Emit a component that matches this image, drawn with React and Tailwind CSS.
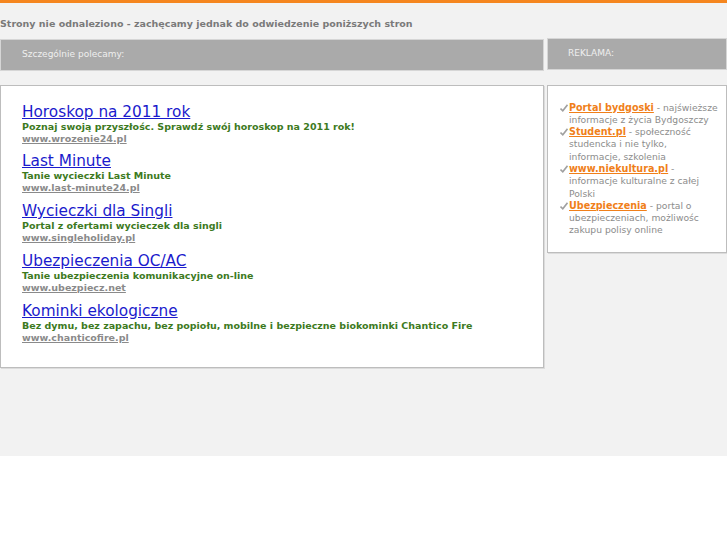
const polecane = [
  {
    title: 'Horoskop na 2011 rok',
    desc: 'Poznaj swoją przyszłośc. Sprawdź swój horoskop na 2011 rok!',
    url: 'www.wrozenie24.pl',
  },
  { title: 'Last Minute', desc: 'Tanie wycieczki Last Minute', url: 'www.last-minute24.pl' },
  { title: 'Wycieczki dla Singli', desc: 'Portal z ofertami wycieczek dla singli', url: 'www.singleholiday.pl' },
  { title: 'Ubezpieczenia OC/AC', desc: 'Tanie ubezpieczenia komunikacyjne on-line', url: 'www.ubezpiecz.net' },
  {
    title: 'Kominki ekologiczne',
    desc: 'Bez dymu, bez zapachu, bez popiołu, mobilne i bezpieczne biokominki Chantico Fire',
    url: 'www.chanticofire.pl',
  },
];

const reklamy = [
  { name: 'Portal bydgoski', text: ' - najświeższe informacje z życia Bydgoszczy' },
  { name: 'Student.pl', text: ' - społeczność studencka i nie tylko, informacje, szkolenia' },
  { name: 'www.niekultura.pl', text: ' - informacje kulturalne z całej Polski' },
  { name: 'Ubezpieczenia', text: ' - portal o ubezpieczeniach, możliwośc zakupu polisy online' },
];

function Check() {
  return (
    <svg width="8" height="8" viewBox="0 0 8 8" className="mt-[2px]">
      <path d="M0.5 4.5 L2.8 6.8 L7.5 0.8" fill="none" stroke="#a0a0a0" strokeWidth="1.6" />
    </svg>
  );
}

export default function App() {
  return (
    <div className="bg-white min-h-[545px] font-['DejaVu_Sans',sans-serif]">
      <div className="bg-[#f2f2f2] min-h-[456px] border-t-[3px] border-[#f5861f]">
        {/* Page heading */}
        <h1 className="pt-[14px] h-[36px] text-[9.5px] font-bold text-[#7a7a7a] leading-[14px]">
          Strony nie odnaleziono - zachęcamy jednak do odwiedzenie poniższych stron
        </h1>

        <div className="flex gap-[3px] items-start">
          {/* Left column */}
          <div className="w-[544px] shrink-0">
            <div className="h-[32px] bg-[#aaaaaa] border border-[#d6d6d6] flex items-center pl-[21px] text-[9px] text-[#efefef]">
              Szczególnie polecamy:
            </div>
            <div className="mt-[14px] h-[283px] bg-white border border-[#bdbdbd] shadow-[1px_1px_0_#dcdcdc] pl-[21px] pt-[16.5px] flex flex-col gap-[7.75px]">
              {polecane.map((p) => (
                <div key={p.url} className="flex flex-col">
                  <a href="#" className="text-[15.3px] leading-[18px] text-[#1a1acc] underline">
                    {p.title}
                  </a>
                  <span className="text-[9.5px] leading-[12px] font-bold text-[#3d7a1e]">{p.desc}</span>
                  <a href="#" className="text-[9.5px] leading-[12px] font-bold text-[#8a8a8a] underline">
                    {p.url}
                  </a>
                </div>
              ))}
            </div>
          </div>

          {/* Right column */}
          <div className="flex-1 -mt-px">
            <div className="h-[32px] bg-[#aaaaaa] border border-[#d6d6d6] flex items-center pl-[20px] text-[9px] text-[#efefef]">
              REKLAMA:
            </div>
            <div className="mt-[15px] h-[168px] bg-white border border-[#bdbdbd] shadow-[1px_1px_0_#dcdcdc] pl-[12px] pr-[6px] pt-[15.5px]">
              {reklamy.map((r) => (
                <div key={r.name} className="flex text-[9.2px] leading-[12.3px] text-[#8c8c8c]">
                  <span className="w-[9px] shrink-0">
                    <Check />
                  </span>
                  <p>
                    <a href="#" className="text-[9.6px] font-bold text-[#f07f1a] underline">
                      {r.name}
                    </a>
                    {r.text}
                  </p>
                </div>
              ))}
            </div>
          </div>
        </div>
      </div>
    </div>
  );
}
